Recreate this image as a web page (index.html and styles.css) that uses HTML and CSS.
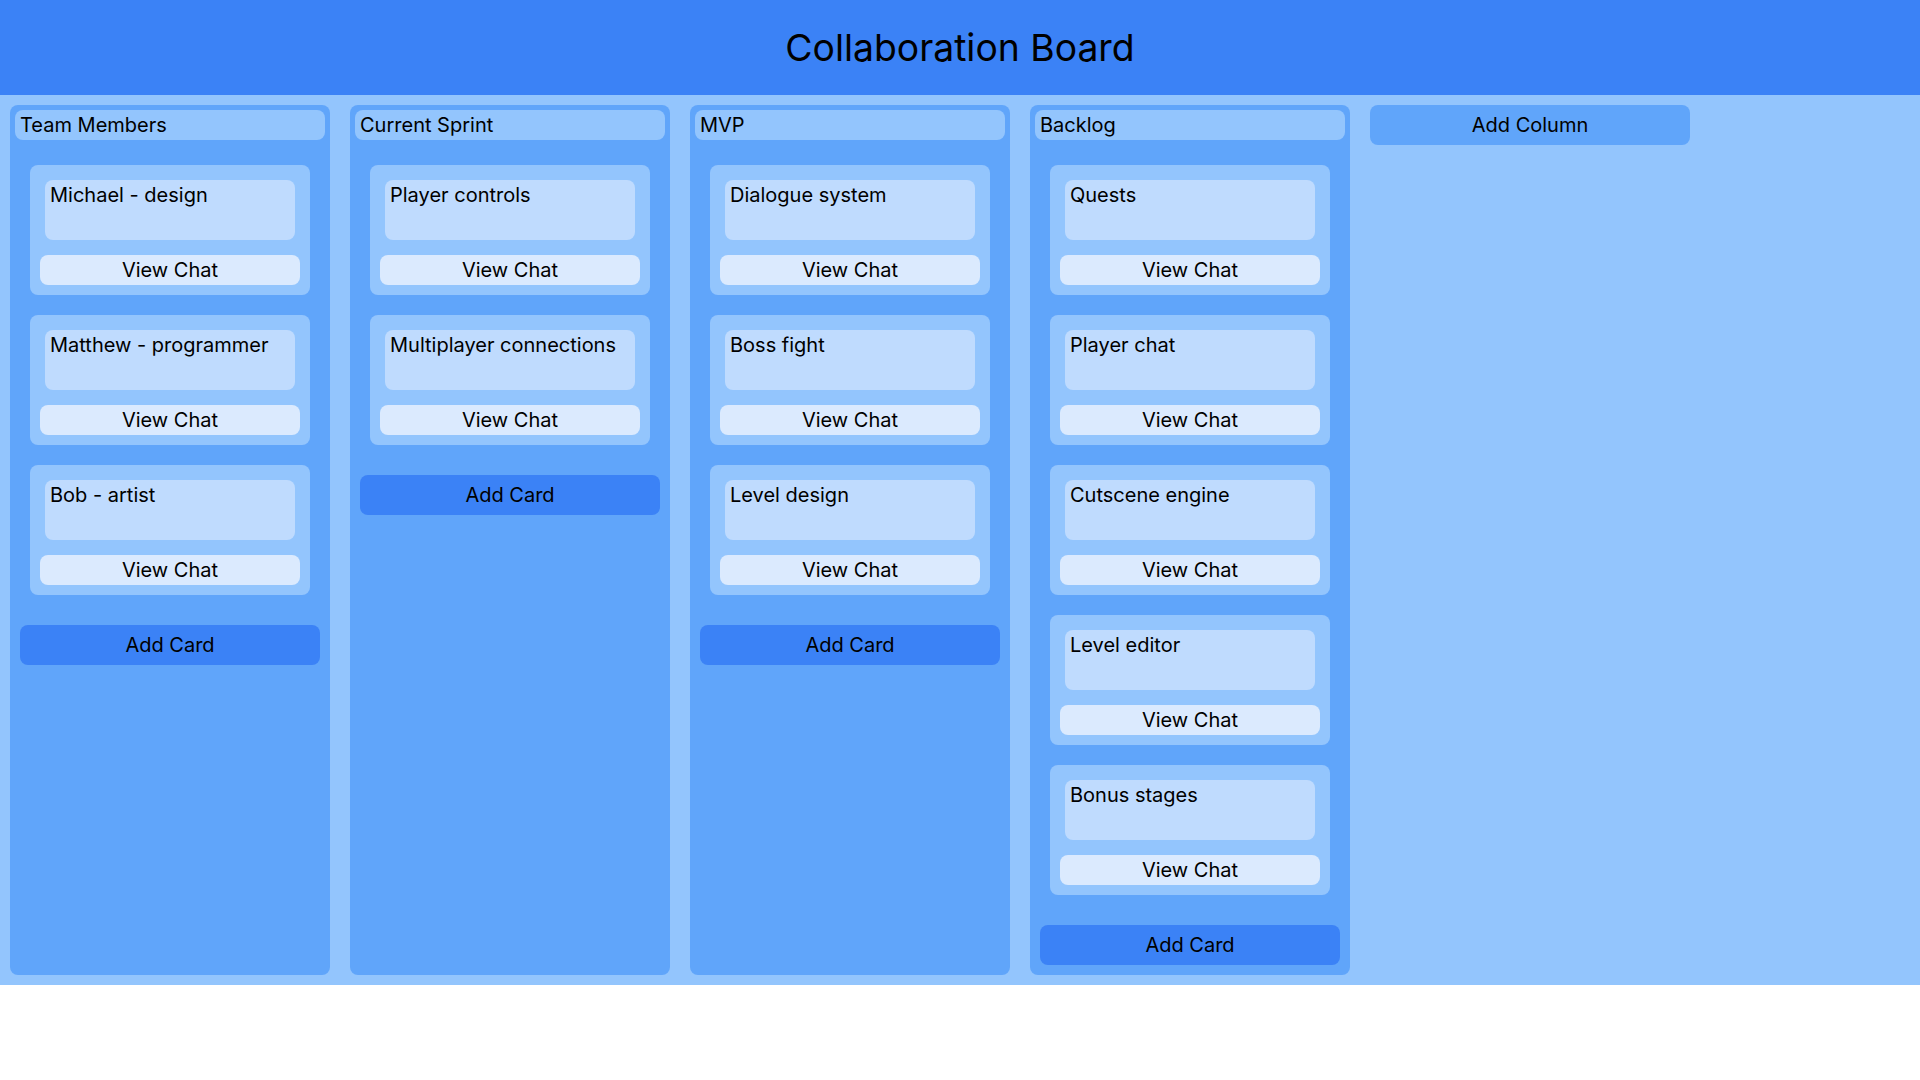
FILE: index.html
```html
<!DOCTYPE html>
<html lang="en">
<head>
<meta charset="utf-8">
<title>Collaboration Board</title>
<link rel="stylesheet" href="styles.css">
</head>
<body>
<header class="topbar">
  <h1 class="title">Collaboration Board</h1>
</header>
<main class="board">
  <section class="column">
    <div class="column-title">Team Members</div>
    <div class="cards">
      <div class="card"><div class="card-text">Michael - design</div><button class="chat-btn">View Chat</button></div>
      <div class="card"><div class="card-text">Matthew - programmer</div><button class="chat-btn">View Chat</button></div>
      <div class="card"><div class="card-text">Bob - artist</div><button class="chat-btn">View Chat</button></div>
    </div>
    <button class="add-card">Add Card</button>
  </section>
  <section class="column">
    <div class="column-title">Current Sprint</div>
    <div class="cards">
      <div class="card"><div class="card-text">Player controls</div><button class="chat-btn">View Chat</button></div>
      <div class="card"><div class="card-text">Multiplayer connections</div><button class="chat-btn">View Chat</button></div>
    </div>
    <button class="add-card">Add Card</button>
  </section>
  <section class="column">
    <div class="column-title">MVP</div>
    <div class="cards">
      <div class="card"><div class="card-text">Dialogue system</div><button class="chat-btn">View Chat</button></div>
      <div class="card"><div class="card-text">Boss fight</div><button class="chat-btn">View Chat</button></div>
      <div class="card"><div class="card-text">Level design</div><button class="chat-btn">View Chat</button></div>
    </div>
    <button class="add-card">Add Card</button>
  </section>
  <section class="column">
    <div class="column-title">Backlog</div>
    <div class="cards">
      <div class="card"><div class="card-text">Quests</div><button class="chat-btn">View Chat</button></div>
      <div class="card"><div class="card-text">Player chat</div><button class="chat-btn">View Chat</button></div>
      <div class="card"><div class="card-text">Cutscene engine</div><button class="chat-btn">View Chat</button></div>
      <div class="card"><div class="card-text">Level editor</div><button class="chat-btn">View Chat</button></div>
      <div class="card"><div class="card-text">Bonus stages</div><button class="chat-btn">View Chat</button></div>
    </div>
    <button class="add-card">Add Card</button>
  </section>
  <button class="add-column">Add Column</button>
</main>
</body>
</html>
```
FILE: styles.css
```css
* { box-sizing: border-box; }

body {
  margin: 0;
  font-family: "Inter", "Liberation Sans", sans-serif;
  color: #000;
  background: #fff;
}

.topbar {
  height: 95px;
  background: #3b82f6;
  display: flex;
  align-items: center;
  justify-content: center;
}

.title {
  margin: 0;
  font-size: 37.3px;
  line-height: 40px;
  font-weight: 400;
}

.board {
  background: #93c5fd;
  padding: 10px;
  display: flex;
  gap: 20px;
  align-items: stretch;
}

.column {
  width: 320px;
  flex: 0 0 320px;
  background: #60a5fa;
  border-radius: 8px;
  padding: 5px 5px 10px;
  display: flex;
  flex-direction: column;
}

.column-title {
  height: 30px;
  line-height: 30px;
  background: #93c5fd;
  border-radius: 8px;
  padding-left: 5px;
  font-size: 20px;
}

.cards {
  margin: 25px 15px 0;
  display: flex;
  flex-direction: column;
  gap: 20px;
}

.card {
  background: #93c5fd;
  border-radius: 8px;
  padding: 10px;
  display: flex;
  flex-direction: column;
}

.card-text {
  margin: 5px 5px 0;
  height: 60px;
  background: #bfdbfe;
  border-radius: 8px;
  padding: 1px 5px 0;
  font-size: 20px;
  line-height: 28px;
}

.chat-btn {
  margin-top: 15px;
  height: 30px;
  border: none;
  border-radius: 8px;
  background: #dbeafe;
  font-family: inherit;
  font-size: 20px;
  line-height: 30px;
  color: #000;
  padding: 0;
}

.add-card {
  margin: 30px 5px 0;
  height: 40px;
  border: none;
  border-radius: 8px;
  background: #3b82f6;
  font-family: inherit;
  font-size: 20px;
  color: #000;
  padding: 0;
}

.add-column {
  width: 320px;
  flex: 0 0 320px;
  align-self: flex-start;
  height: 40px;
  border: none;
  border-radius: 8px;
  background: #60a5fa;
  font-family: inherit;
  font-size: 20px;
  color: #000;
  padding: 0;
}
```
